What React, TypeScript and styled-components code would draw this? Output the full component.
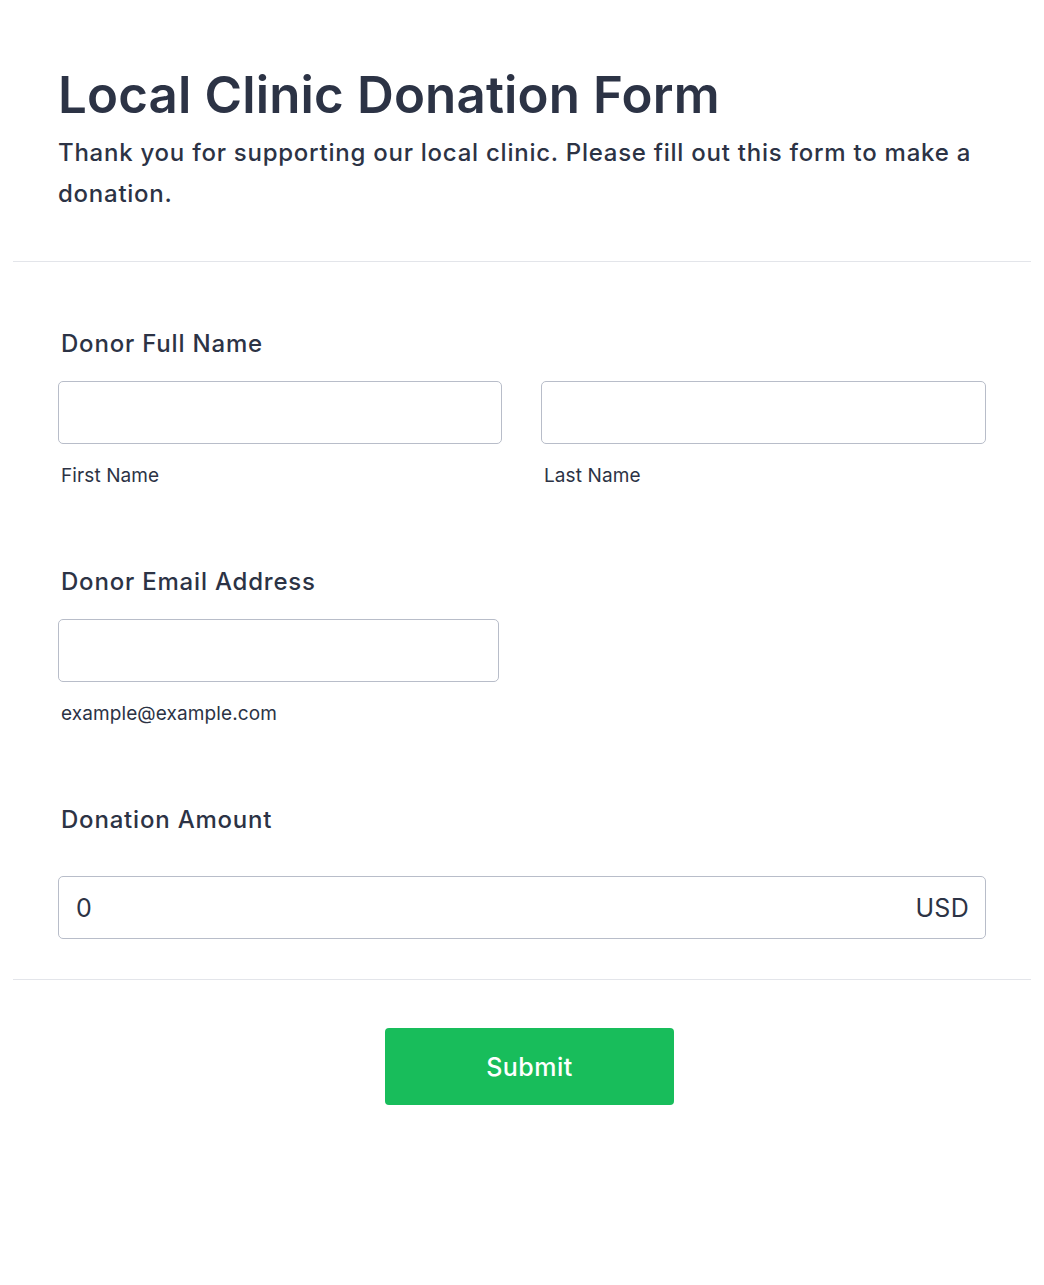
import React from "react";
import styled, { createGlobalStyle } from "styled-components";

const Global = createGlobalStyle`
  html, body { margin: 0; padding: 0; background: #ffffff; }
  body { font-family: Inter, "Noto Sans", sans-serif; color: #2c3345; }
  * { box-sizing: border-box; }
`;

const Page = styled.div`
  padding: 0 13px 160px;
`;

const Header = styled.header`
  padding: 65px 45px 47px;
  border-bottom: 1px solid #e3e5ea;
`;

const Title = styled.h1`
  margin: 0;
  font-size: 51px;
  line-height: 60px;
  font-weight: 600;
  color: #2c3345;
  letter-spacing: 0.15px;
`;

const Subtitle = styled.p`
  margin: 7px 0 0;
  font-size: 24px;
  line-height: 41px;
  font-weight: 500;
  letter-spacing: 0.75px;
  color: #2c3345;
`;

const Body = styled.div`
  padding: 67px 45px 40px;
  border-bottom: 1px solid #e3e5ea;
  display: flex;
  flex-direction: column;
`;

const Field = styled.section<{ $gap?: number }>`
  display: flex;
  flex-direction: column;
  margin-bottom: ${(p) => p.$gap ?? 0}px;
`;

const Label = styled.label<{ $space: number }>`
  display: block;
  padding-left: 3px;
  font-size: 24px;
  line-height: 30px;
  font-weight: 500;
  letter-spacing: 0.8px;
  color: #2c3345;
  margin-bottom: ${(p) => p.$space}px;
`;

const Row = styled.div`
  display: grid;
  grid-template-columns: 444px 445px;
  column-gap: 39px;
`;

const Cell = styled.div<{ $width?: number }>`
  display: flex;
  flex-direction: column;
  width: ${(p) => (p.$width ? `${p.$width}px` : "auto")};
`;

const Input = styled.input`
  display: block;
  width: 100%;
  height: 63px;
  border: 1px solid #b8bdc9;
  border-radius: 5px;
  background: #ffffff;
  font-family: inherit;
  font-size: 24px;
  color: #2c3345;
  padding: 0 17px;
  outline: none;
`;

const SubLabel = styled.span`
  display: block;
  margin-top: 20px;
  padding-left: 3px;
  font-size: 19px;
  line-height: 24px;
  letter-spacing: 0.1px;
  color: #2c3345;
`;

const AmountBox = styled.div`
  display: flex;
  align-items: center;
  height: 63px;
  border: 1px solid #b8bdc9;
  border-radius: 5px;
  padding: 0 16px 0 17px;
`;

const AmountInput = styled.input`
  flex: 1;
  border: none;
  outline: none;
  font-family: inherit;
  font-size: 25px;
  color: #2c3345;
  padding: 0;
  background: transparent;
`;

const Currency = styled.span`
  font-size: 25px;
  letter-spacing: 0.3px;
  color: #2c3345;
`;

const Footer = styled.div`
  display: flex;
  justify-content: center;
  padding: 48px 0 0 15px;
`;

const Submit = styled.button`
  width: 289px;
  height: 77px;
  border: none;
  border-radius: 4px;
  background: #18bd5b;
  color: #ffffff;
  font-family: inherit;
  font-size: 25px;
  font-weight: 500;
  letter-spacing: 0.5px;
  cursor: pointer;
`;

export default function App() {
  return (
    <Page>
      <Global />
      <Header>
        <Title>Local Clinic Donation Form</Title>
        <Subtitle>
          Thank you for supporting our local clinic. Please fill out this form to make a donation.
        </Subtitle>
      </Header>
      <Body>
        <Field $gap={79}>
          <Label $space={22}>Donor Full Name</Label>
          <Row>
            <Cell>
              <Input type="text" aria-label="First Name" />
              <SubLabel>First Name</SubLabel>
            </Cell>
            <Cell>
              <Input type="text" aria-label="Last Name" />
              <SubLabel>Last Name</SubLabel>
            </Cell>
          </Row>
        </Field>
        <Field $gap={79}>
          <Label $space={22}>Donor Email Address</Label>
          <Cell $width={441}>
            <Input type="email" aria-label="Email" />
            <SubLabel>example@example.com</SubLabel>
          </Cell>
        </Field>
        <Field>
          <Label $space={41}>Donation Amount</Label>
          <AmountBox>
            <AmountInput type="text" defaultValue="0" aria-label="Amount" />
            <Currency>USD</Currency>
          </AmountBox>
        </Field>
      </Body>
      <Footer>
        <Submit type="button">Submit</Submit>
      </Footer>
    </Page>
  );
}
